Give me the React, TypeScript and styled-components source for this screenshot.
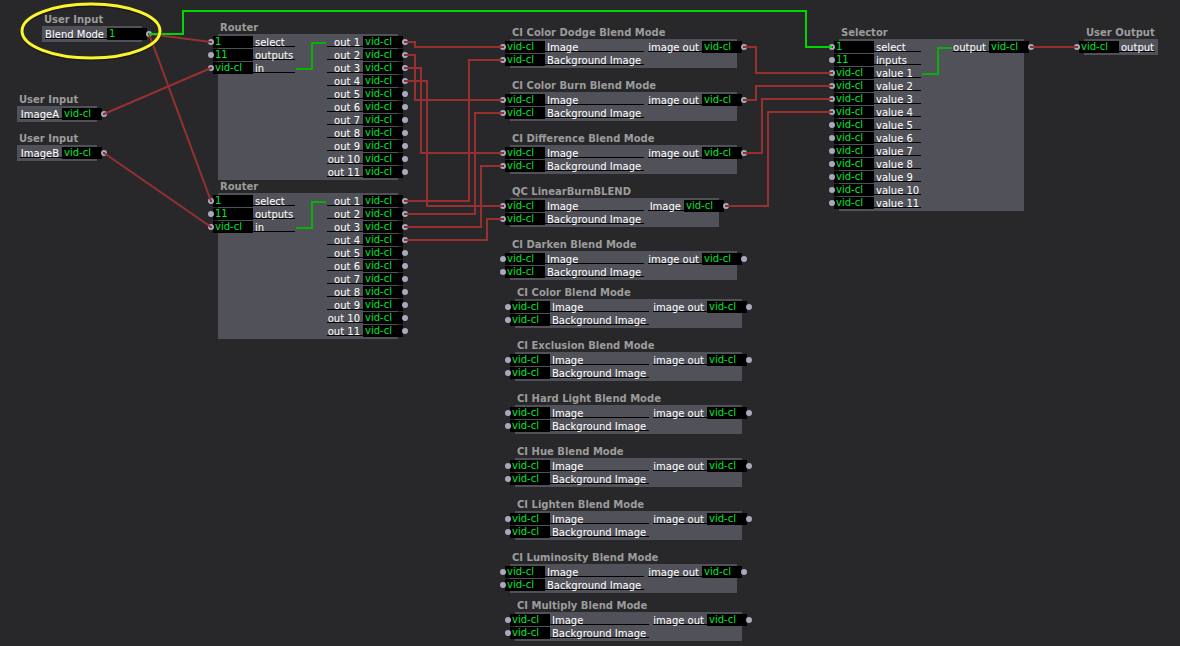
import React from "react";
import styled, { createGlobalStyle, css } from "styled-components";

const GlobalStyle = createGlobalStyle`
  body {
    margin: 0;
    background: #28282a;
    color: #fff;
    font: 10px/12px "DejaVu Sans", Verdana, sans-serif;
  }
`;

const Canvas = styled.main`
  position: relative;
  min-height: 100vh;
  overflow: hidden;
`;

const Node = styled.section<{ $x: number; $y: number }>`
  position: absolute;
  left: ${(p) => p.$x}px;
  top: ${(p) => p.$y}px;
`;

const Title = styled.h2`
  margin: 0;
  padding-left: 2px;
  height: 12px;
  font-size: 10px;
  line-height: 12px;
  font-weight: bold;
  color: #9c9c9c;
  white-space: nowrap;
`;

const Body = styled.div<{ $gap: number; $hasIn: boolean; $hasOut: boolean }>`
  display: flex;
  align-items: flex-start;
  gap: ${(p) => p.$gap}px;
  padding: 2px 3px;
  ${(p) => p.$hasIn && css`padding-left: 0;`}
  ${(p) => p.$hasOut && css`padding-right: 0;`}
  background: #515159;
`;

const Ports = styled.ul<{ $side: Side }>`
  display: flex;
  flex-direction: column;
  gap: 1px;
  margin: ${(p) => (p.$side === "in" ? "0 0 0 -5px" : "0 -5px 0 0")};
  padding: 0;
  list-style: none;
`;

const Port = styled.li<{ $side: Side }>`
  position: relative;
  display: flex;
  flex-direction: ${(p) => (p.$side === "in" ? "row" : "row-reverse")};
  height: 12px;
`;

const Value = styled.span`
  box-sizing: border-box;
  width: 40px;
  padding-left: 2px;
  background: #000;
  color: #00e632;
`;

const Label = styled.span<{ $width: number; $side: Side }>`
  box-sizing: border-box;
  width: ${(p) => p.$width}px;
  height: 11px;
  padding: ${(p) => (p.$side === "in" ? "0 0 0 2px" : "0 3px 0 0")};
  border-bottom: 1px solid #000;
  line-height: 14px;
  text-align: ${(p) => (p.$side === "in" ? "left" : "right")};
  white-space: nowrap;
`;

const Dot = styled.i<{ $side: Side; $on: boolean }>`
  position: absolute;
  top: 3px;
  ${(p) => (p.$side === "in" ? "left" : "right")}: -5px;
  box-sizing: border-box;
  width: 6px;
  height: 6px;
  border-radius: 50%;
  background: ${(p) => (p.$on ? "#28282a" : "#a9a9bd")};
  border: 2px solid #a9a9bd;
`;

const Wires = styled.svg`
  position: absolute;
  left: 0;
  top: 0;
  width: 1180px;
  height: 646px;
  pointer-events: none;
  fill: none;
`;

type Side = "in" | "out";
type PortData = { label: string; value: string; on?: boolean };
type NodeData = {
  title: string;
  x: number;
  y: number;
  gap?: number;
  inputs?: PortData[];
  outputs?: PortData[];
  inWidth?: number;
  outWidth?: number;
};

const VID = "vid-cl";

const series = (name: string, connected: number): PortData[] =>
  Array.from({ length: 11 }, (_, i) => ({
    label: `${name} ${i + 1}`,
    value: VID,
    on: i < connected,
  }));

const router = (y: number): NodeData => ({
  title: "Router",
  x: 218,
  y,
  gap: 32,
  inWidth: 42,
  outWidth: 36,
  inputs: [
    { label: "select", value: "1", on: true },
    { label: "outputs", value: "11" },
    { label: "in", value: VID, on: true },
  ],
  outputs: series("out", 4),
});

const blend = (
  title: string,
  x: number,
  y: number,
  on = false,
  out = "image out",
  outWidth = 54
): NodeData => ({
  title,
  x,
  y,
  gap: 4,
  inWidth: 99,
  outWidth,
  inputs: [
    { label: "Image", value: VID, on },
    { label: "Background Image", value: VID, on },
  ],
  outputs: [{ label: out, value: VID, on }],
});

const userInput = (
  x: number,
  y: number,
  label: string,
  value: string,
  outWidth: number
): NodeData => ({
  title: "User Input",
  x,
  y,
  outWidth,
  outputs: [{ label, value, on: true }],
});

const nodes: NodeData[] = [
  userInput(42, 14, "Blend Mode", "1", 62),
  userInput(17, 94, "ImageA", VID, 42),
  userInput(17, 133, "ImageB", VID, 42),
  router(22),
  router(181),
  blend("CI Color Dodge Blend Mode", 510, 27, true),
  blend("CI Color Burn Blend Mode", 510, 80, true),
  blend("CI Difference Blend Mode", 510, 133, true),
  blend("QC LinearBurnBLEND", 510, 186, true, "Image", 36),
  blend("CI Darken Blend Mode", 510, 239),
  blend("CI Color Blend Mode", 515, 287),
  blend("CI Exclusion Blend Mode", 515, 340),
  blend("CI Hard Light Blend Mode", 515, 393),
  blend("CI Hue Blend Mode", 515, 446),
  blend("CI Lighten Blend Mode", 515, 499),
  blend("CI Luminosity Blend Mode", 510, 552),
  blend("CI Multiply Blend Mode", 515, 600),
  {
    title: "Selector",
    x: 839,
    y: 27,
    gap: 32,
    inWidth: 47,
    outWidth: 36,
    inputs: [
      { label: "select", value: "1", on: true },
      { label: "inputs", value: "11" },
      ...series("value", 4),
    ],
    outputs: [{ label: "output", value: VID, on: true }],
  },
  {
    title: "User Output",
    x: 1084,
    y: 27,
    inWidth: 36,
    inputs: [{ label: "output", value: VID, on: true }],
  },
];

const cables = [
  "M149 34L211 42",
  "M149 34L211 201",
  "M104 114L211 68",
  "M104 153L211 227",
  "M405 42H415V47H503",
  "M405 55H415V100H503",
  "M405 68H421V153H503",
  "M405 81H427V206H503",
  "M405 201H469V60H503",
  "M405 214H475V113H503",
  "M405 227H481V166H503",
  "M405 240H487V219H503",
  "M744 47H756V73H832",
  "M744 100H756V86H832",
  "M744 153H762V99H832",
  "M726 206H768V112H832",
  "M1031 47H1077",
];

const routes = [
  "M296 69H312V43H326",
  "M296 228H312V202H326",
  "M922 74H938V48H952",
];

function PortList({ side, ports, width }: { side: Side; ports: PortData[]; width: number }) {
  return (
    <Ports $side={side}>
      {ports.map((p) => (
        <Port key={p.label} $side={side}>
          <Value>{p.value}</Value>
          <Label $width={width} $side={side}>{p.label}</Label>
          <Dot $side={side} $on={!!p.on} />
        </Port>
      ))}
    </Ports>
  );
}

export default function App() {
  return (
    <Canvas>
      <GlobalStyle />
      {nodes.map((n) => (
        <Node key={`${n.title}-${n.y}`} $x={n.x} $y={n.y}>
          <Title>{n.title}</Title>
          <Body $gap={n.gap ?? 0} $hasIn={!!n.inputs} $hasOut={!!n.outputs}>
            {n.inputs && <PortList side="in" ports={n.inputs} width={n.inWidth ?? 0} />}
            {n.outputs && <PortList side="out" ports={n.outputs} width={n.outWidth ?? 0} />}
          </Body>
        </Node>
      ))}
      <Wires viewBox="0 0 1180 646" aria-hidden="true">
        <g stroke="#983030" strokeWidth="2">
          {cables.map((d) => <path key={d} d={d} />)}
        </g>
        <g stroke="#0aaf0a" strokeWidth="2">
          {routes.map((d) => <path key={d} d={d} />)}
        </g>
        <path d="M149 34H183V11H806V47H832" stroke="#00d600" strokeWidth="2" />
        <ellipse cx="91" cy="32" rx="69" ry="27" stroke="#101012" strokeOpacity="0.5" strokeWidth="4" />
        <ellipse cx="91" cy="31" rx="69" ry="27" stroke="#fbf52b" strokeWidth="3" />
      </Wires>
    </Canvas>
  );
}
